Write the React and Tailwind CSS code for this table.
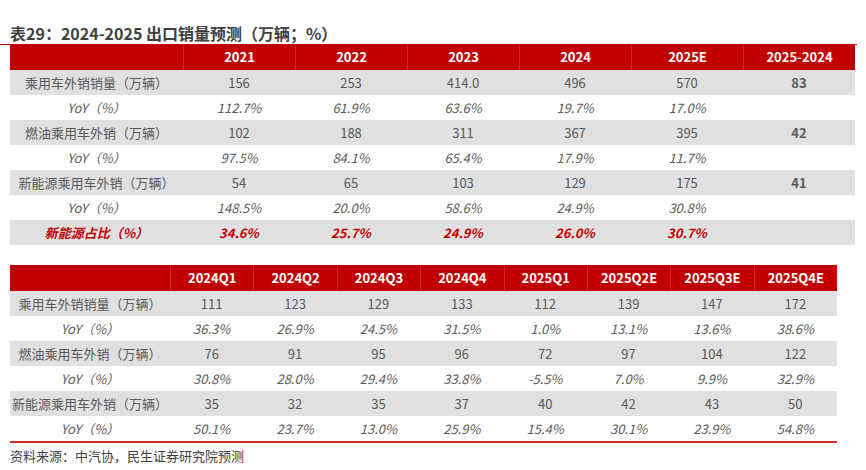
import React from "react";

const font = { fontFamily: '"Noto Sans CJK SC", "Noto Sans", sans-serif' };

const t1Header = ["2021", "2022", "2023", "2024", "2025E", "2025-2024"];
const t1Rows = [
  { label: "乘用车外销销量（万辆）", vals: ["156", "253", "414.0", "496", "570", "83"], type: "gray" },
  { label: "YoY（%）", vals: ["112.7%", "61.9%", "63.6%", "19.7%", "17.0%", ""], type: "yoy" },
  { label: "燃油乘用车外销（万辆）", vals: ["102", "188", "311", "367", "395", "42"], type: "gray" },
  { label: "YoY（%）", vals: ["97.5%", "84.1%", "65.4%", "17.9%", "11.7%", ""], type: "yoy" },
  { label: "新能源乘用车外销（万辆）", vals: ["54", "65", "103", "129", "175", "41"], type: "gray" },
  { label: "YoY（%）", vals: ["148.5%", "20.0%", "58.6%", "24.9%", "30.8%", ""], type: "yoy" },
  { label: "新能源占比（%）", vals: ["34.6%", "25.7%", "24.9%", "26.0%", "30.7%", ""], type: "red" },
];

const t2Header = ["2024Q1", "2024Q2", "2024Q3", "2024Q4", "2025Q1", "2025Q2E", "2025Q3E", "2025Q4E"];
const t2Rows = [
  { label: "乘用车外销销量（万辆）", vals: ["111", "123", "129", "133", "112", "139", "147", "172"], type: "gray" },
  { label: "YoY（%）", vals: ["36.3%", "26.9%", "24.5%", "31.5%", "1.0%", "13.1%", "13.6%", "38.6%"], type: "yoy" },
  { label: "燃油乘用车外销（万辆）", vals: ["76", "91", "95", "96", "72", "97", "104", "122"], type: "gray" },
  { label: "YoY（%）", vals: ["30.8%", "28.0%", "29.4%", "33.8%", "-5.5%", "7.0%", "9.9%", "32.9%"], type: "yoy" },
  { label: "新能源乘用车外销（万辆）", vals: ["35", "32", "35", "37", "40", "42", "43", "50"], type: "gray" },
  { label: "YoY（%）", vals: ["50.1%", "23.7%", "13.0%", "25.9%", "15.4%", "30.1%", "23.9%", "54.8%"], type: "yoy" },
];

function Cell({ children, type, bold }) {
  let cls = "flex items-center justify-center h-[25px] text-[13px] whitespace-nowrap ";
  if (type === "gray") cls += "bg-[#e0e0e0] text-[#595959]";
  else if (type === "yoy") cls += "bg-white text-[#595959] italic";
  else cls += "bg-[#e0e0e0] text-[#c00000] italic font-bold";
  if (bold) cls += " font-bold";
  return <div className={cls}>{children}</div>;
}

function HeaderCell({ children, first }) {
  return (
    <div
      className={
        "flex items-center justify-center h-[26px] bg-[#c00000] text-white font-bold text-[13px] " +
        (first ? "" : "border-l border-[#cc2a2a]")
      }
    >
      {children}
    </div>
  );
}

export default function App() {
  return (
    <div className="w-[866px] h-[470px] bg-white overflow-hidden" style={font}>
      <div className="h-[44px] flex items-end pl-[10px] pb-[1px]">
        <div className="text-[16px] font-bold text-[#404040] leading-[20px]">
          表29：2024-2025 出口销量预测（万辆；%）
        </div>
      </div>
      <div className="relative">
        <div className="absolute left-0 top-0 w-[857px] h-px bg-[#c00000]" />
      </div>
      <div className="pl-[10px]">
        <div className="grid w-[845px] grid-cols-[173px_repeat(6,112px)]">
          <HeaderCell first>{""}</HeaderCell>
          {t1Header.map((h) => (
            <HeaderCell key={h}>{h}</HeaderCell>
          ))}
          {t1Rows.map((r, i) => (
            <React.Fragment key={i}>
              <Cell type={r.type}>{r.label}</Cell>
              {r.vals.map((v, j) => (
                <Cell key={j} type={r.type} bold={j === 5}>
                  {v}
                </Cell>
              ))}
            </React.Fragment>
          ))}
        </div>

        <div className="mt-[20px] w-[827px] border-b-2 border-[#d02a2a]">
          <div className="grid grid-cols-[160px_repeat(8,1fr)]">
            <HeaderCell first>{""}</HeaderCell>
            {t2Header.map((h) => (
              <HeaderCell key={h}>{h}</HeaderCell>
            ))}
            {t2Rows.map((r, i) => (
              <React.Fragment key={i}>
                <Cell type={r.type}>{r.label}</Cell>
                {r.vals.map((v, j) => (
                  <Cell key={j} type={r.type}>
                    {v}
                  </Cell>
                ))}
              </React.Fragment>
            ))}
          </div>
        </div>
        <div className="mt-[4px] text-[13px] text-[#404040] leading-[18px]">
          资料来源：中汽协，民生证券研究院预测
        </div>
      </div>
    </div>
  );
}
